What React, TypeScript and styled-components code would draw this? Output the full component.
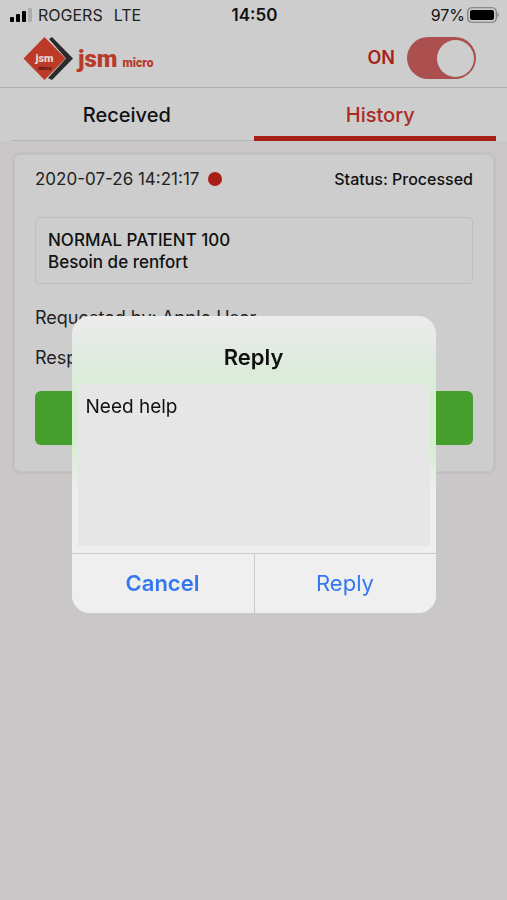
import React, { useState } from "react";
import styled, { createGlobalStyle } from "styled-components";

const red = "#a71f17";

const GlobalStyle = createGlobalStyle`
  *, *::before, *::after { box-sizing: border-box; }
  body {
    margin: 0;
    background: #cac7c8;
    color: #111;
    font-family: Inter, "Liberation Sans", sans-serif;
  }
  button, textarea { font: inherit; color: inherit; }
`;

const Page = styled.div`
  min-height: 100vh;
`;

const StatusBar = styled.div`
  display: grid;
  grid-template-columns: 1fr auto 1fr;
  align-items: center;
  height: 30px;
  padding: 0 8px 0 10px;
  background: #cdcdcd;
  font-size: 16px;
  line-height: 20px;
`;

const Carrier = styled.div`
  display: flex;
  align-items: center;
  gap: 6px;
  color: #222;
`;

const Network = styled.span`
  margin-left: 5px;
`;

const Clock = styled.time`
  font-size: 17px;
  font-weight: 600;
`;

const Battery = styled.div`
  display: flex;
  align-items: center;
  justify-content: flex-end;
  gap: 2px;
`;

const Header = styled.header`
  display: flex;
  align-items: center;
  justify-content: space-between;
  height: 58px;
  padding: 0 31px 2px 23px;
  background: #cdcdcd;
  border-bottom: 1px solid #adadad;
`;

const Brand = styled.div`
  display: flex;
  align-items: center;
  gap: 4px;
  padding-top: 2px;
  color: #b83a2b;
  font-family: Roboto, "Liberation Sans", sans-serif;
  font-weight: 900;
`;

const BrandName = styled.div`
  display: flex;
  align-items: baseline;
  gap: 5px;
  padding-top: 4px;
  font-size: 24px;
  line-height: 32px;
`;

const BrandSuffix = styled.span`
  font-size: 12px;
`;

const SwitchLabel = styled.label`
  display: flex;
  align-items: center;
  gap: 12px;
  color: ${red};
  font-size: 18px;
  font-weight: 600;
`;

const Switch = styled.input`
  appearance: none;
  display: flex;
  justify-content: flex-end;
  width: 69px;
  height: 42px;
  margin: 0;
  padding: 3px 2px;
  border-radius: 21px;
  background: #ab4f4f;

  &::before {
    content: "";
    width: 37px;
    height: 37px;
    border-radius: 50%;
    background: #cdcdcd;
  }

  &:not(:checked) {
    justify-content: flex-start;
    background: #999;
  }
`;

const Tabs = styled.nav`
  display: flex;
  background: #cdcdcd;
`;

const Tab = styled.button<{ $active?: boolean }>`
  display: flex;
  flex: 1;
  flex-direction: column;
  justify-content: space-between;
  align-items: stretch;
  height: 53px;
  padding: 14px 0 0;
  border: 0;
  background: none;
  color: ${(p) => (p.$active ? "#ab2b22" : "#111")};
  font-size: 20px;
  font-weight: 500;
  line-height: 26px;
  text-align: center;

  &::after {
    content: "";
    height: ${(p) => (p.$active ? "5px" : "1px")};
    background: ${(p) => (p.$active ? red : "#b5b5b5")};
  }

  &:first-child::after {
    margin-left: 11px;
  }

  &:last-child::after {
    margin-right: 11px;
  }
`;

const Card = styled.article`
  margin: 13px 13px 0 14px;
  padding: 12px 20px 26px;
  border: 1px solid #c5c3c4;
  border-radius: 6px;
  background: #cdcdcd;
  box-shadow: 0 0 3px 1px #bcb9ba;
  font-size: 18px;
`;

const CardHead = styled.div`
  display: flex;
  align-items: center;
  justify-content: space-between;
  font-size: 17px;
  line-height: 24px;
`;

const Stamp = styled.div`
  display: flex;
  align-items: center;
  gap: 9px;
  color: #222;
`;

const Dot = styled.span`
  width: 14px;
  height: 14px;
  border-radius: 50%;
  background: ${red};
`;

const Status = styled.span`
  font-size: 16px;
  font-weight: 500;
`;

const Message = styled.div`
  margin: 26px 0 22px;
  padding: 11px 12px 10px;
  border: 1px solid #bebebe;
  border-radius: 4px;
  font-weight: 500;
  font-size: 17px;
  line-height: 22px;
`;

const Detail = styled.p`
  margin: 0 0 16px;
  color: #222;
  line-height: 24px;
`;

const RespondButton = styled.button`
  display: block;
  width: 100%;
  height: 54px;
  margin-top: 21px;
  border: 0;
  border-radius: 6px;
  background: #469f2c;
  color: #cdcdcd;
`;

const Overlay = styled.div`
  position: fixed;
  inset: 0;
  display: flex;
  align-items: center;
  justify-content: center;
  padding: 28px 16px 0;
`;

const Dialog = styled.form`
  width: 100%;
  max-width: 364px;
  overflow: hidden;
  border-radius: 18px;
  background: linear-gradient(
    #ececec,
    #e2eae3 34px,
    #daecd7 68px,
    #d5edd0 100px,
    #d8edd4 135px,
    #efefef 175px
  );
`;

const DialogTitle = styled.h2`
  margin: 0;
  padding: 27px 16px 13px;
  color: #111;
  font-size: 22px;
  font-weight: 600;
  line-height: 28px;
  text-align: center;
`;

const ReplyText = styled.textarea`
  display: block;
  width: calc(100% - 12px);
  height: 162px;
  margin: 0 6px 7px;
  padding: 9px 8px;
  border: 0;
  outline: 0;
  resize: none;
  background: #e6e6e6;
  font-size: 19px;
  line-height: 28px;
`;

const Actions = styled.div`
  display: grid;
  grid-template-columns: 1fr 1fr;
  border-top: 1px solid #c9c9c9;
  background: #efefef;
`;

const Action = styled.button<{ $strong?: boolean }>`
  height: 59px;
  padding: 0;
  border: 0;
  background: none;
  color: #3478f0;
  font-size: 22px;
  font-weight: ${(p) => (p.$strong ? 600 : 400)};

  & + & {
    border-left: 1px solid #c9c9c9;
  }
`;

const SignalIcon = () => (
  <svg width="22" height="14" viewBox="0 0 22 14" aria-hidden="true">
    <rect x="0" y="9" width="4" height="5" rx="1" fill="#000" />
    <rect x="6" y="6" width="4" height="8" rx="1" fill="#000" />
    <rect x="12" y="3" width="4" height="11" rx="1" fill="#000" />
    <rect x="18" y="0" width="4" height="14" rx="1" fill="#aeaeae" />
  </svg>
);

const BatteryIcon = () => (
  <svg width="32" height="16" viewBox="0 0 32 16" aria-hidden="true">
    <rect x="0.75" y="0.75" width="28.5" height="14.5" rx="4" fill="none" stroke="#777" strokeWidth="1.2" />
    <rect x="3" y="3" width="24" height="10" rx="2" fill="#000" />
    <path d="M30.5 5.5c1.6.6 1.6 4.4 0 5z" fill="#777" />
  </svg>
);

const LogoMark = () => (
  <svg width="51" height="43" viewBox="0 0 51 43" aria-hidden="true">
    <path d="M26 2 29 0 50 21.5 29 43 25 41 43 21.5z" fill="#2b2b2b" />
    <path d="M21.5 0 42.5 21.5 21.5 43 0.5 21.5z" fill="#bd3928" />
    <text x="21.5" y="25" textAnchor="middle" fontSize="11" fill="#e6d5d1">
      jsm
    </text>
    <text x="21.5" y="33" textAnchor="middle" fontSize="5" fill="#4a1a14">
      micro
    </text>
  </svg>
);

export default function App() {
  const [on, setOn] = useState(true);
  const [reply, setReply] = useState("Need help");

  return (
    <>
      <GlobalStyle />
      <Page>
        <StatusBar>
          <Carrier>
            <SignalIcon />
            <span>ROGERS</span>
            <Network>LTE</Network>
          </Carrier>
          <Clock>14:50</Clock>
          <Battery>
            <span>97%</span>
            <BatteryIcon />
          </Battery>
        </StatusBar>
        <Header>
          <Brand>
            <LogoMark />
            <BrandName>
              jsm <BrandSuffix>micro</BrandSuffix>
            </BrandName>
          </Brand>
          <SwitchLabel>
            ON
            <Switch type="checkbox" role="switch" checked={on} onChange={(e) => setOn(e.target.checked)} />
          </SwitchLabel>
        </Header>
        <Tabs>
          <Tab type="button">Received</Tab>
          <Tab type="button" $active>
            History
          </Tab>
        </Tabs>
        <Card>
          <CardHead>
            <Stamp>
              <time>2020-07-26 14:21:17</time>
              <Dot />
            </Stamp>
            <Status>Status: Processed</Status>
          </CardHead>
          <Message>
            NORMAL PATIENT 100
            <br />
            Besoin de renfort
          </Message>
          <Detail>Requested by: Apple User</Detail>
          <Detail>Resp</Detail>
          <RespondButton type="button" aria-label="Reply" />
        </Card>
      </Page>
      <Overlay>
        <Dialog role="dialog" aria-labelledby="reply-title" onSubmit={(e) => e.preventDefault()}>
          <DialogTitle id="reply-title">Reply</DialogTitle>
          <ReplyText aria-labelledby="reply-title" value={reply} onChange={(e) => setReply(e.target.value)} />
          <Actions>
            <Action type="button" $strong>
              Cancel
            </Action>
            <Action type="submit">Reply</Action>
          </Actions>
        </Dialog>
      </Overlay>
    </>
  );
}
